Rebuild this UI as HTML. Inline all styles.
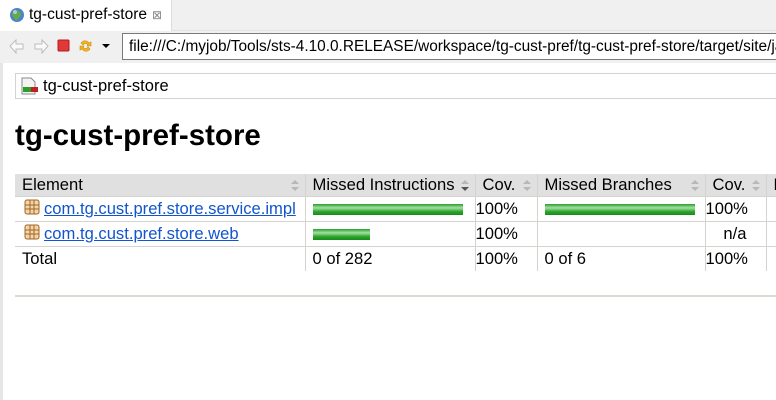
<!DOCTYPE html>
<html><head><meta charset="utf-8"><style>
*{margin:0;padding:0;box-sizing:border-box}
body{width:776px;height:400px;overflow:hidden;background:#fff;font-family:"Liberation Sans",Arial,sans-serif;position:relative;color:#000}
.abs{position:absolute}
.tabbar{left:0;top:0;width:776px;height:31px;background:#f0f0f0;border-bottom:1px solid #e3e3e3}
.tab{left:0;top:0;width:172px;height:31px;background:#fff;border-right:1px solid #ddd}
.toolbar{left:0;top:31px;width:776px;height:32px;background:#f0f0f0}
.addr{left:122px;top:33px;width:660px;height:27px;border:1px solid #7a7a7a;background:#fff;font-size:15.4px;line-height:25px;padding-left:6px;white-space:nowrap;overflow:hidden;color:#000}
.leftstrip{left:0;top:63px;width:3px;height:337px;background:#e6e6e6}
.crumb{left:15px;top:73px;width:770px;height:26px;border:1px solid #d6d3ce;font-size:16.5px;line-height:24px;padding-left:27px}
h1{position:absolute;left:15px;top:119px;font-size:29.5px;font-weight:bold}
table{position:absolute;left:15px;top:174px;border-collapse:collapse;font-size:16.6px;table-layout:fixed;width:771px}
th{background:#e0e0e0;font-weight:normal;text-align:left;height:22px;padding:0 7px;border-left:1px solid #d6d3ce;white-space:nowrap;position:relative;overflow:hidden}
td{height:25px;padding:0 7px;border-left:1px solid #d6d3ce;border-top:1px solid #d6d3ce;white-space:nowrap;overflow:hidden}
tr:first-child th{border-bottom:1px solid #d6d3ce}
th:first-child,td:first-child{border-left:none}
td a{color:#1155cc;text-decoration:underline;padding-left:22px;position:relative}
.bar{display:inline-block;height:11px;background:linear-gradient(#2b9e2b,#a3e0a3 35%,#29a329 70%,#1b8a1b);vertical-align:middle}
td.ar{text-align:right;padding-right:19px;padding-left:0}
.sort{position:absolute;right:6px;top:6px;width:8px;height:11px}
</style></head><body>
<div class="abs tabbar"></div>
<div class="abs tab">
  <svg class="abs" style="left:9px;top:7px" width="16" height="16"><circle cx="8" cy="8" r="7" fill="#4a86c5"/><path d="M3 6c2-2 4 0 5-2s3 1 4 3-2 3-3 5-3 1-4-1-2-2-2-5z" fill="#6aa64a"/><circle cx="6" cy="5" r="2" fill="#cfe5f7" opacity=".7"/></svg>
  <span class="abs" style="left:29px;top:6px;font-size:15.5px;color:#000">tg-cust-pref-store</span>
  <span class="abs" style="left:152px;top:8px;font-size:12px;color:#888">⊠</span>
</div>
<div class="abs toolbar"></div>
<svg class="abs" style="left:8px;top:38px" width="110" height="18">
  <path d="M2 8 8 2v4h7v5H8v4z" fill="#fafafa" stroke="#bdbdbd"/>
  <path d="M40 8 34 2v4h-7v5h7v4z" fill="#fafafa" stroke="#bdbdbd"/>
  <rect x="50" y="2" width="11" height="11" rx="1" fill="#e23838" stroke="#b01e1e"/>
  <path d="M73 5c2-3 6-3 8 0l2-1v4h-4l1-1c-1-2-4-2-5 0zM82 11c-2 3-6 3-8 0l-2 1V8h4l-1 1c1 2 4 2 5 0z" fill="#f0b429" stroke="#c98b00" stroke-width=".6"/>
  <path d="M94 6h8l-4 4z" fill="#000"/>
</svg>
<div class="abs addr">file:///C:/myjob/Tools/sts-4.10.0.RELEASE/workspace/tg-cust-pref/tg-cust-pref-store/target/site/jacoco/index.html</div>
<div class="abs leftstrip"></div>
<div class="abs crumb">tg-cust-pref-store</div>
<svg class="abs" style="left:21px;top:77px" width="18" height="18"><path d="M1 1h9l4 4v12H1z" fill="#f4f4f4" stroke="#8a8a8a"/><rect x="2" y="10" width="8" height="5" fill="#2aa02a"/><rect x="10" y="10" width="7" height="5" fill="#c02020"/></svg>
<h1>tg-cust-pref-store</h1>
<table>
<colgroup><col style="width:290px"><col style="width:170px"><col style="width:62px"><col style="width:168px"><col style="width:61px"><col style="width:20px"></colgroup>
<tr><th>Element<svg class="sort" viewBox="0 0 8 11"><path d="M0 4 4 0 8 4zM0 7h8l-4 4z" fill="#b8b8b8"/></svg></th>
<th>Missed Instructions<svg class="sort" viewBox="0 0 8 11"><path d="M0 4 4 0 8 4z" fill="#b8b8b8"/><path d="M0 7h8l-4 4z" fill="#555"/></svg></th>
<th>Cov.<svg class="sort" viewBox="0 0 8 11"><path d="M0 4 4 0 8 4zM0 7h8l-4 4z" fill="#b8b8b8"/></svg></th>
<th>Missed Branches<svg class="sort" viewBox="0 0 8 11"><path d="M0 4 4 0 8 4zM0 7h8l-4 4z" fill="#b8b8b8"/></svg></th>
<th>Cov.<svg class="sort" viewBox="0 0 8 11"><path d="M0 4 4 0 8 4zM0 7h8l-4 4z" fill="#b8b8b8"/></svg></th>
<th>M</th></tr>
<tr><td><a href="#"><svg class="abs" style="left:2px;top:0" width="16" height="16"><rect x="1" y="1" width="14" height="14" rx="2" fill="#f3d6a8" stroke="#a0642a"/><path d="M1 6h14M1 10h14M6 1v14M10 1v14" stroke="#a0642a"/></svg>com.tg.cust.pref.store.service.impl</a></td><td><span class="bar" style="width:150px"></span></td><td class="ar">100%</td><td><span class="bar" style="width:150px"></span></td><td class="ar">100%</td><td></td></tr>
<tr><td><a href="#"><svg class="abs" style="left:2px;top:0" width="16" height="16"><rect x="1" y="1" width="14" height="14" rx="2" fill="#f3d6a8" stroke="#a0642a"/><path d="M1 6h14M1 10h14M6 1v14M10 1v14" stroke="#a0642a"/></svg>com.tg.cust.pref.store.web</a></td><td><span class="bar" style="width:57px"></span></td><td class="ar">100%</td><td></td><td class="ar">n/a</td><td></td></tr>
<tr><td>Total</td><td>0 of 282</td><td class="ar">100%</td><td>0 of 6</td><td class="ar">100%</td><td></td></tr>
</table>
<div class="abs" style="left:15px;top:295px;width:761px;height:2px;background:#dcd9d4"></div>
</body></html>
